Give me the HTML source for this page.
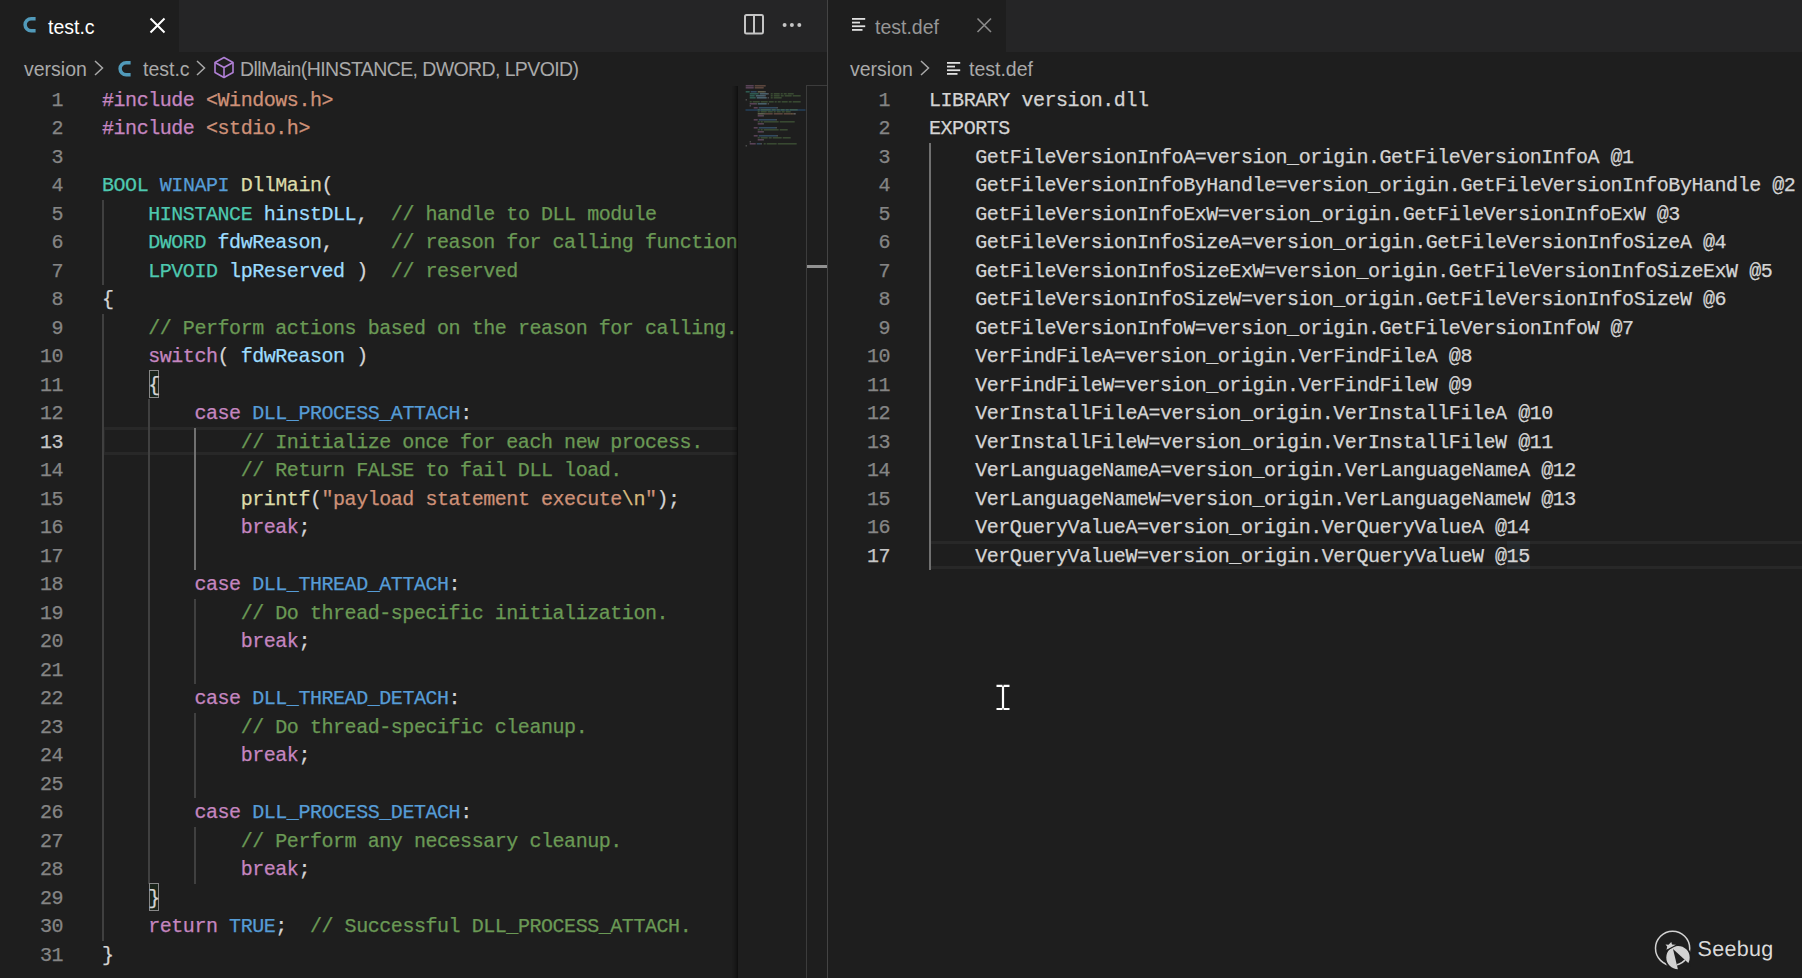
<!DOCTYPE html>
<html><head><meta charset="utf-8"><style>
*{margin:0;padding:0;box-sizing:border-box}
html,body{width:1802px;height:978px;overflow:hidden;background:#1e1e1e}
body{position:relative;font-family:"Liberation Sans",sans-serif}
.abs{position:absolute}
.code{position:absolute;white-space:pre;font-family:"Liberation Mono",monospace;font-size:20px;letter-spacing:-0.45px;line-height:28.5px;height:28.5px;color:#d4d4d4;-webkit-text-stroke:0.25px currentColor}
.ln{position:absolute;white-space:pre;font-family:"Liberation Mono",monospace;font-size:20px;letter-spacing:-0.45px;line-height:28.5px;height:28.5px;color:#858585;text-align:right;-webkit-text-stroke:0.25px currentColor}
.ui{position:absolute;white-space:pre;font-family:"Liberation Sans",sans-serif}
</style></head><body>

<div class="abs" style="left:0;top:0;width:827px;height:52px;background:#252526"></div>
<div class="abs" style="left:0;top:0;width:179px;height:52px;background:#1e1e1e"></div>
<div class="abs" style="left:828px;top:0;width:974px;height:52px;background:#252526"></div>
<div class="abs" style="left:828px;top:0;width:178px;height:52px;background:#1e1e1e"></div>
<div class="abs" style="left:827px;top:0;width:1px;height:978px;background:#444444"></div>
<svg class="abs" style="left:23px;top:16.7px" width="13" height="16" viewBox="0 0 13 16"><path d="M12.6 1.75H8.2A6.1 5.95 0 0 0 8.2 13.65H12.6" stroke="#519aba" stroke-width="3.5" fill="none"/></svg>
<div class="ui" style="left:48px;top:15.5px;font-size:19.5px;color:#ffffff;">test.c</div>
<svg class="abs" style="left:148px;top:16px" width="19" height="19" viewBox="0 0 19 19"><path d="M2.5 2.5L16.5 16.5M16.5 2.5L2.5 16.5" stroke="#ffffff" stroke-width="2" fill="none"/></svg>
<svg class="abs" style="left:742px;top:12px" width="24" height="24" viewBox="0 0 24 24"><rect x="3" y="3" width="18" height="18.5" rx="1.5" stroke="#c5c5c5" stroke-width="2" fill="none"/><line x1="12" y1="3" x2="12" y2="21.5" stroke="#c5c5c5" stroke-width="2"/></svg>
<svg class="abs" style="left:780px;top:20px" width="24" height="10" viewBox="0 0 24 10"><circle cx="4.6" cy="5" r="2" fill="#c5c5c5"/><circle cx="11.9" cy="5" r="2" fill="#c5c5c5"/><circle cx="19.3" cy="5" r="2" fill="#c5c5c5"/></svg>
<svg class="abs" style="left:852px;top:18.1px" width="14" height="14" viewBox="0 0 14 14"><g fill="#e0e0e0"><rect x="0" y="0" width="13.2" height="1.8"/><rect x="0" y="3.67" width="8" height="1.8"/><rect x="0" y="7.34" width="13.2" height="1.8"/><rect x="0" y="11" width="10.5" height="1.8"/></g></svg>
<div class="ui" style="left:875px;top:15.5px;font-size:19.5px;color:#969696;">test.def</div>
<svg class="abs" style="left:975px;top:16px" width="19" height="19" viewBox="0 0 19 19"><path d="M2.5 2.5L16 16M16 2.5L2.5 16" stroke="#8a8a8a" stroke-width="1.6" fill="none"/></svg>
<div class="ui" style="left:24px;top:58px;font-size:19.5px;color:#a9a9a9;">version</div>
<svg class="abs" style="left:93.5px;top:60px" width="10" height="16" viewBox="0 0 10 16"><path d="M1 1L8.5 8L1 15" stroke="#a9a9a9" stroke-width="1.5" fill="none"/></svg>
<svg class="abs" style="left:118px;top:60.8px" width="13" height="16" viewBox="0 0 13 16"><path d="M12.6 1.75H8.2A6.1 5.95 0 0 0 8.2 13.65H12.6" stroke="#519aba" stroke-width="3.5" fill="none"/></svg>
<div class="ui" style="left:143px;top:58px;font-size:19.5px;color:#a9a9a9;">test.c</div>
<svg class="abs" style="left:195.5px;top:60px" width="10" height="16" viewBox="0 0 10 16"><path d="M1 1L8.5 8L1 15" stroke="#a9a9a9" stroke-width="1.5" fill="none"/></svg>
<svg class="abs" style="left:213px;top:56px" width="22" height="23" viewBox="0 0 22 23"><g stroke="#b180d7" stroke-width="1.6" fill="none" stroke-linejoin="round"><path d="M11 1.5L20 6.5V16.5L11 21.5L2 16.5V6.5Z"/><path d="M2 6.5L11 11.5L20 6.5M11 11.5V21.5"/></g></svg>
<div class="ui" style="left:240px;top:58px;font-size:19.5px;color:#a9a9a9;letter-spacing:-0.6px">DllMain(HINSTANCE, DWORD, LPVOID)</div>
<div class="ui" style="left:850px;top:58px;font-size:19.5px;color:#a9a9a9;">version</div>
<svg class="abs" style="left:920px;top:60px" width="10" height="16" viewBox="0 0 10 16"><path d="M1 1L8.5 8L1 15" stroke="#a9a9a9" stroke-width="1.5" fill="none"/></svg>
<svg class="abs" style="left:947px;top:62.1px" width="14" height="14" viewBox="0 0 14 14"><g fill="#e0e0e0"><rect x="0" y="0" width="13.2" height="1.8"/><rect x="0" y="3.67" width="8" height="1.8"/><rect x="0" y="7.34" width="13.2" height="1.8"/><rect x="0" y="11" width="10.5" height="1.8"/></g></svg>
<div class="ui" style="left:969px;top:58px;font-size:19.5px;color:#a9a9a9;">test.def</div>
<div class="abs" style="left:0;top:85.5px;width:737px;height:892.5px;overflow:hidden">
<div class="abs" style="left:104px;top:341.50px;width:640px;height:28px;border:3px solid #282828;border-left-width:1px"></div>
<div class="abs" style="left:102.00px;top:114.00px;width:2px;height:85.50px;background:#404040"></div>
<div class="abs" style="left:102.00px;top:228.00px;width:2px;height:627.00px;background:#404040"></div>
<div class="abs" style="left:148.20px;top:313.50px;width:2px;height:484.50px;background:#404040"></div>
<div class="abs" style="left:194.40px;top:342.00px;width:2px;height:142.50px;background:#707070"></div>
<div class="abs" style="left:194.40px;top:513.00px;width:2px;height:85.50px;background:#404040"></div>
<div class="abs" style="left:194.40px;top:627.00px;width:2px;height:85.50px;background:#404040"></div>
<div class="abs" style="left:194.40px;top:741.00px;width:2px;height:57.00px;background:#404040"></div>
<div class="abs" style="left:149px;top:284.50px;width:10px;height:28px;border:1px solid #888888;background:rgba(0,100,0,0.1)"></div>
<div class="abs" style="left:149px;top:797.50px;width:10px;height:28px;border:1px solid #888888;background:rgba(0,100,0,0.1)"></div>
<div class="ln" style="left:0;top:1.00px;width:63px;color:#858585">1</div>
<div class="code" style="left:102px;top:1.00px"><span style="color:#c586c0">#include</span> <span style="color:#ce9178">&lt;Windows.h&gt;</span></div>
<div class="ln" style="left:0;top:29.50px;width:63px;color:#858585">2</div>
<div class="code" style="left:102px;top:29.50px"><span style="color:#c586c0">#include</span> <span style="color:#ce9178">&lt;stdio.h&gt;</span></div>
<div class="ln" style="left:0;top:58.00px;width:63px;color:#858585">3</div>
<div class="code" style="left:102px;top:58.00px"></div>
<div class="ln" style="left:0;top:86.50px;width:63px;color:#858585">4</div>
<div class="code" style="left:102px;top:86.50px"><span style="color:#4ec9b0">BOOL</span> <span style="color:#569cd6">WINAPI</span> <span style="color:#dcdcaa">DllMain</span>(</div>
<div class="ln" style="left:0;top:115.00px;width:63px;color:#858585">5</div>
<div class="code" style="left:102px;top:115.00px">    <span style="color:#4ec9b0">HINSTANCE</span> <span style="color:#9cdcfe">hinstDLL</span>,  <span style="color:#6a9955">// handle to DLL module</span></div>
<div class="ln" style="left:0;top:143.50px;width:63px;color:#858585">6</div>
<div class="code" style="left:102px;top:143.50px">    <span style="color:#4ec9b0">DWORD</span> <span style="color:#9cdcfe">fdwReason</span>,     <span style="color:#6a9955">// reason for calling function</span></div>
<div class="ln" style="left:0;top:172.00px;width:63px;color:#858585">7</div>
<div class="code" style="left:102px;top:172.00px">    <span style="color:#4ec9b0">LPVOID</span> <span style="color:#9cdcfe">lpReserved</span> )  <span style="color:#6a9955">// reserved</span></div>
<div class="ln" style="left:0;top:200.50px;width:63px;color:#858585">8</div>
<div class="code" style="left:102px;top:200.50px">{</div>
<div class="ln" style="left:0;top:229.00px;width:63px;color:#858585">9</div>
<div class="code" style="left:102px;top:229.00px">    <span style="color:#6a9955">// Perform actions based on the reason for calling.</span></div>
<div class="ln" style="left:0;top:257.50px;width:63px;color:#858585">10</div>
<div class="code" style="left:102px;top:257.50px">    <span style="color:#c586c0">switch</span>( <span style="color:#9cdcfe">fdwReason</span> )</div>
<div class="ln" style="left:0;top:286.00px;width:63px;color:#858585">11</div>
<div class="code" style="left:102px;top:286.00px">    {</div>
<div class="ln" style="left:0;top:314.50px;width:63px;color:#858585">12</div>
<div class="code" style="left:102px;top:314.50px">        <span style="color:#c586c0">case</span> <span style="color:#569cd6">DLL_PROCESS_ATTACH</span>:</div>
<div class="ln" style="left:0;top:343.00px;width:63px;color:#c6c6c6">13</div>
<div class="code" style="left:102px;top:343.00px">            <span style="color:#6a9955">// Initialize once for each new process.</span></div>
<div class="ln" style="left:0;top:371.50px;width:63px;color:#858585">14</div>
<div class="code" style="left:102px;top:371.50px">            <span style="color:#6a9955">// Return FALSE to fail DLL load.</span></div>
<div class="ln" style="left:0;top:400.00px;width:63px;color:#858585">15</div>
<div class="code" style="left:102px;top:400.00px">            <span style="color:#dcdcaa">printf</span>(<span style="color:#ce9178">&quot;payload statement execute</span><span style="color:#d7ba7d">\n</span><span style="color:#ce9178">&quot;</span>);</div>
<div class="ln" style="left:0;top:428.50px;width:63px;color:#858585">16</div>
<div class="code" style="left:102px;top:428.50px">            <span style="color:#c586c0">break</span>;</div>
<div class="ln" style="left:0;top:457.00px;width:63px;color:#858585">17</div>
<div class="code" style="left:102px;top:457.00px"></div>
<div class="ln" style="left:0;top:485.50px;width:63px;color:#858585">18</div>
<div class="code" style="left:102px;top:485.50px">        <span style="color:#c586c0">case</span> <span style="color:#569cd6">DLL_THREAD_ATTACH</span>:</div>
<div class="ln" style="left:0;top:514.00px;width:63px;color:#858585">19</div>
<div class="code" style="left:102px;top:514.00px">            <span style="color:#6a9955">// Do thread-specific initialization.</span></div>
<div class="ln" style="left:0;top:542.50px;width:63px;color:#858585">20</div>
<div class="code" style="left:102px;top:542.50px">            <span style="color:#c586c0">break</span>;</div>
<div class="ln" style="left:0;top:571.00px;width:63px;color:#858585">21</div>
<div class="code" style="left:102px;top:571.00px"></div>
<div class="ln" style="left:0;top:599.50px;width:63px;color:#858585">22</div>
<div class="code" style="left:102px;top:599.50px">        <span style="color:#c586c0">case</span> <span style="color:#569cd6">DLL_THREAD_DETACH</span>:</div>
<div class="ln" style="left:0;top:628.00px;width:63px;color:#858585">23</div>
<div class="code" style="left:102px;top:628.00px">            <span style="color:#6a9955">// Do thread-specific cleanup.</span></div>
<div class="ln" style="left:0;top:656.50px;width:63px;color:#858585">24</div>
<div class="code" style="left:102px;top:656.50px">            <span style="color:#c586c0">break</span>;</div>
<div class="ln" style="left:0;top:685.00px;width:63px;color:#858585">25</div>
<div class="code" style="left:102px;top:685.00px"></div>
<div class="ln" style="left:0;top:713.50px;width:63px;color:#858585">26</div>
<div class="code" style="left:102px;top:713.50px">        <span style="color:#c586c0">case</span> <span style="color:#569cd6">DLL_PROCESS_DETACH</span>:</div>
<div class="ln" style="left:0;top:742.00px;width:63px;color:#858585">27</div>
<div class="code" style="left:102px;top:742.00px">            <span style="color:#6a9955">// Perform any necessary cleanup.</span></div>
<div class="ln" style="left:0;top:770.50px;width:63px;color:#858585">28</div>
<div class="code" style="left:102px;top:770.50px">            <span style="color:#c586c0">break</span>;</div>
<div class="ln" style="left:0;top:799.00px;width:63px;color:#858585">29</div>
<div class="code" style="left:102px;top:799.00px">    }</div>
<div class="ln" style="left:0;top:827.50px;width:63px;color:#858585">30</div>
<div class="code" style="left:102px;top:827.50px">    <span style="color:#c586c0">return</span> <span style="color:#569cd6">TRUE</span>;  <span style="color:#6a9955">// Successful DLL_PROCESS_ATTACH.</span></div>
<div class="ln" style="left:0;top:856.00px;width:63px;color:#858585">31</div>
<div class="code" style="left:102px;top:856.00px">}</div>
</div>
<div class="abs" style="left:732px;top:85.5px;width:6px;height:892.5px;box-shadow:#000 -6px 0 6px -6px inset"></div>
<svg class="abs" style="left:738px;top:85px" width="68" height="892" viewBox="0 0 68 892"><rect x="7.5" y="24" width="60" height="2" fill="#264f78" opacity="0.5"/><rect x="7.7" y="0.3" width="8" height="1.1" fill="#c586c0" opacity="0.5"/><rect x="16.7" y="0.3" width="11" height="1.1" fill="#ce9178" opacity="0.5"/><rect x="7.7" y="2.3" width="8" height="1.1" fill="#c586c0" opacity="0.5"/><rect x="16.7" y="2.3" width="9" height="1.1" fill="#ce9178" opacity="0.5"/><rect x="7.7" y="6.3" width="4" height="1.1" fill="#4ec9b0" opacity="0.5"/><rect x="12.7" y="6.3" width="6" height="1.1" fill="#569cd6" opacity="0.5"/><rect x="19.7" y="6.3" width="7" height="1.1" fill="#dcdcaa" opacity="0.5"/><rect x="26.7" y="6.3" width="1" height="1.1" fill="#d4d4d4" opacity="0.5"/><rect x="11.7" y="8.3" width="9" height="1.1" fill="#4ec9b0" opacity="0.5"/><rect x="21.7" y="8.3" width="8" height="1.1" fill="#9cdcfe" opacity="0.5"/><rect x="29.7" y="8.3" width="1" height="1.1" fill="#d4d4d4" opacity="0.5"/><rect x="32.7" y="8.3" width="2" height="1.1" fill="#6a9955" opacity="0.5"/><rect x="35.7" y="8.3" width="6" height="1.1" fill="#6a9955" opacity="0.5"/><rect x="42.7" y="8.3" width="2" height="1.1" fill="#6a9955" opacity="0.5"/><rect x="45.7" y="8.3" width="3" height="1.1" fill="#6a9955" opacity="0.5"/><rect x="49.7" y="8.3" width="6" height="1.1" fill="#6a9955" opacity="0.5"/><rect x="11.7" y="10.3" width="5" height="1.1" fill="#4ec9b0" opacity="0.5"/><rect x="17.7" y="10.3" width="9" height="1.1" fill="#9cdcfe" opacity="0.5"/><rect x="26.7" y="10.3" width="1" height="1.1" fill="#d4d4d4" opacity="0.5"/><rect x="32.7" y="10.3" width="2" height="1.1" fill="#6a9955" opacity="0.5"/><rect x="35.7" y="10.3" width="6" height="1.1" fill="#6a9955" opacity="0.5"/><rect x="42.7" y="10.3" width="3" height="1.1" fill="#6a9955" opacity="0.5"/><rect x="46.7" y="10.3" width="7" height="1.1" fill="#6a9955" opacity="0.5"/><rect x="54.7" y="10.3" width="8" height="1.1" fill="#6a9955" opacity="0.5"/><rect x="11.7" y="12.3" width="6" height="1.1" fill="#4ec9b0" opacity="0.5"/><rect x="18.7" y="12.3" width="10" height="1.1" fill="#9cdcfe" opacity="0.5"/><rect x="29.7" y="12.3" width="1" height="1.1" fill="#d4d4d4" opacity="0.5"/><rect x="32.7" y="12.3" width="2" height="1.1" fill="#6a9955" opacity="0.5"/><rect x="35.7" y="12.3" width="8" height="1.1" fill="#6a9955" opacity="0.5"/><rect x="7.7" y="14.3" width="1" height="1.1" fill="#d4d4d4" opacity="0.5"/><rect x="11.7" y="16.3" width="2" height="1.1" fill="#6a9955" opacity="0.5"/><rect x="14.7" y="16.3" width="7" height="1.1" fill="#6a9955" opacity="0.5"/><rect x="22.7" y="16.3" width="7" height="1.1" fill="#6a9955" opacity="0.5"/><rect x="30.7" y="16.3" width="5" height="1.1" fill="#6a9955" opacity="0.5"/><rect x="36.7" y="16.3" width="2" height="1.1" fill="#6a9955" opacity="0.5"/><rect x="39.7" y="16.3" width="3" height="1.1" fill="#6a9955" opacity="0.5"/><rect x="43.7" y="16.3" width="6" height="1.1" fill="#6a9955" opacity="0.5"/><rect x="50.7" y="16.3" width="3" height="1.1" fill="#6a9955" opacity="0.5"/><rect x="54.7" y="16.3" width="8" height="1.1" fill="#6a9955" opacity="0.5"/><rect x="11.7" y="18.3" width="6" height="1.1" fill="#c586c0" opacity="0.5"/><rect x="17.7" y="18.3" width="1" height="1.1" fill="#d4d4d4" opacity="0.5"/><rect x="19.7" y="18.3" width="9" height="1.1" fill="#9cdcfe" opacity="0.5"/><rect x="29.7" y="18.3" width="1" height="1.1" fill="#d4d4d4" opacity="0.5"/><rect x="11.7" y="20.3" width="1" height="1.1" fill="#d4d4d4" opacity="0.5"/><rect x="15.7" y="22.3" width="4" height="1.1" fill="#c586c0" opacity="0.5"/><rect x="20.7" y="22.3" width="18" height="1.1" fill="#569cd6" opacity="0.5"/><rect x="38.7" y="22.3" width="1" height="1.1" fill="#d4d4d4" opacity="0.5"/><rect x="19.7" y="24.3" width="2" height="1.1" fill="#6a9955" opacity="0.5"/><rect x="22.7" y="24.3" width="10" height="1.1" fill="#6a9955" opacity="0.5"/><rect x="33.7" y="24.3" width="4" height="1.1" fill="#6a9955" opacity="0.5"/><rect x="38.7" y="24.3" width="3" height="1.1" fill="#6a9955" opacity="0.5"/><rect x="42.7" y="24.3" width="4" height="1.1" fill="#6a9955" opacity="0.5"/><rect x="47.7" y="24.3" width="3" height="1.1" fill="#6a9955" opacity="0.5"/><rect x="51.7" y="24.3" width="8" height="1.1" fill="#6a9955" opacity="0.5"/><rect x="19.7" y="26.3" width="2" height="1.1" fill="#6a9955" opacity="0.5"/><rect x="22.7" y="26.3" width="6" height="1.1" fill="#6a9955" opacity="0.5"/><rect x="29.7" y="26.3" width="5" height="1.1" fill="#6a9955" opacity="0.5"/><rect x="35.7" y="26.3" width="2" height="1.1" fill="#6a9955" opacity="0.5"/><rect x="38.7" y="26.3" width="4" height="1.1" fill="#6a9955" opacity="0.5"/><rect x="43.7" y="26.3" width="3" height="1.1" fill="#6a9955" opacity="0.5"/><rect x="47.7" y="26.3" width="5" height="1.1" fill="#6a9955" opacity="0.5"/><rect x="19.7" y="28.3" width="6" height="1.1" fill="#dcdcaa" opacity="0.5"/><rect x="25.7" y="28.3" width="1" height="1.1" fill="#d4d4d4" opacity="0.5"/><rect x="26.7" y="28.3" width="8" height="1.1" fill="#ce9178" opacity="0.5"/><rect x="35.7" y="28.3" width="9" height="1.1" fill="#ce9178" opacity="0.5"/><rect x="45.7" y="28.3" width="7" height="1.1" fill="#ce9178" opacity="0.5"/><rect x="52.7" y="28.3" width="2" height="1.1" fill="#d7ba7d" opacity="0.5"/><rect x="54.7" y="28.3" width="1" height="1.1" fill="#ce9178" opacity="0.5"/><rect x="55.7" y="28.3" width="2" height="1.1" fill="#d4d4d4" opacity="0.5"/><rect x="19.7" y="30.3" width="5" height="1.1" fill="#c586c0" opacity="0.5"/><rect x="24.7" y="30.3" width="1" height="1.1" fill="#d4d4d4" opacity="0.5"/><rect x="15.7" y="34.3" width="4" height="1.1" fill="#c586c0" opacity="0.5"/><rect x="20.7" y="34.3" width="17" height="1.1" fill="#569cd6" opacity="0.5"/><rect x="37.7" y="34.3" width="1" height="1.1" fill="#d4d4d4" opacity="0.5"/><rect x="19.7" y="36.3" width="2" height="1.1" fill="#6a9955" opacity="0.5"/><rect x="22.7" y="36.3" width="2" height="1.1" fill="#6a9955" opacity="0.5"/><rect x="25.7" y="36.3" width="15" height="1.1" fill="#6a9955" opacity="0.5"/><rect x="41.7" y="36.3" width="15" height="1.1" fill="#6a9955" opacity="0.5"/><rect x="19.7" y="38.3" width="5" height="1.1" fill="#c586c0" opacity="0.5"/><rect x="24.7" y="38.3" width="1" height="1.1" fill="#d4d4d4" opacity="0.5"/><rect x="15.7" y="42.3" width="4" height="1.1" fill="#c586c0" opacity="0.5"/><rect x="20.7" y="42.3" width="17" height="1.1" fill="#569cd6" opacity="0.5"/><rect x="37.7" y="42.3" width="1" height="1.1" fill="#d4d4d4" opacity="0.5"/><rect x="19.7" y="44.3" width="2" height="1.1" fill="#6a9955" opacity="0.5"/><rect x="22.7" y="44.3" width="2" height="1.1" fill="#6a9955" opacity="0.5"/><rect x="25.7" y="44.3" width="15" height="1.1" fill="#6a9955" opacity="0.5"/><rect x="41.7" y="44.3" width="8" height="1.1" fill="#6a9955" opacity="0.5"/><rect x="19.7" y="46.3" width="5" height="1.1" fill="#c586c0" opacity="0.5"/><rect x="24.7" y="46.3" width="1" height="1.1" fill="#d4d4d4" opacity="0.5"/><rect x="15.7" y="50.3" width="4" height="1.1" fill="#c586c0" opacity="0.5"/><rect x="20.7" y="50.3" width="18" height="1.1" fill="#569cd6" opacity="0.5"/><rect x="38.7" y="50.3" width="1" height="1.1" fill="#d4d4d4" opacity="0.5"/><rect x="19.7" y="52.3" width="2" height="1.1" fill="#6a9955" opacity="0.5"/><rect x="22.7" y="52.3" width="7" height="1.1" fill="#6a9955" opacity="0.5"/><rect x="30.7" y="52.3" width="3" height="1.1" fill="#6a9955" opacity="0.5"/><rect x="34.7" y="52.3" width="9" height="1.1" fill="#6a9955" opacity="0.5"/><rect x="44.7" y="52.3" width="8" height="1.1" fill="#6a9955" opacity="0.5"/><rect x="19.7" y="54.3" width="5" height="1.1" fill="#c586c0" opacity="0.5"/><rect x="24.7" y="54.3" width="1" height="1.1" fill="#d4d4d4" opacity="0.5"/><rect x="11.7" y="56.3" width="1" height="1.1" fill="#d4d4d4" opacity="0.5"/><rect x="11.7" y="58.3" width="6" height="1.1" fill="#c586c0" opacity="0.5"/><rect x="18.7" y="58.3" width="4" height="1.1" fill="#569cd6" opacity="0.5"/><rect x="22.7" y="58.3" width="1" height="1.1" fill="#d4d4d4" opacity="0.5"/><rect x="25.7" y="58.3" width="2" height="1.1" fill="#6a9955" opacity="0.5"/><rect x="28.7" y="58.3" width="10" height="1.1" fill="#6a9955" opacity="0.5"/><rect x="39.7" y="58.3" width="19" height="1.1" fill="#6a9955" opacity="0.5"/><rect x="7.7" y="60.3" width="1" height="1.1" fill="#d4d4d4" opacity="0.5"/></svg>
<div class="abs" style="left:806px;top:85px;width:21px;height:893px;border-left:1px solid #3c3c3c;border-top:1px solid #3c3c3c"></div>
<div class="abs" style="left:807px;top:265px;width:20px;height:3px;background:#919191"></div>
<div class="abs" style="left:828px;top:85.5px;width:974px;height:892.5px;overflow:hidden">
<div class="abs" style="left:102px;top:455.50px;width:900px;height:28px;border:3px solid #282828;border-left-width:1px"></div>
<div class="abs" style="left:101.00px;top:57.00px;width:2px;height:427.50px;background:#707070"></div>
<div class="abs" style="left:678.50px;top:455.50px;width:23.10px;height:27.5px;background:rgba(120,160,200,0.08)"></div>
<div class="ln" style="left:0;top:1.00px;width:62px;color:#858585">1</div>
<div class="code" style="left:101px;top:1.00px">LIBRARY version.dll</div>
<div class="ln" style="left:0;top:29.50px;width:62px;color:#858585">2</div>
<div class="code" style="left:101px;top:29.50px">EXPORTS</div>
<div class="ln" style="left:0;top:58.00px;width:62px;color:#858585">3</div>
<div class="code" style="left:101px;top:58.00px">    GetFileVersionInfoA=version_origin.GetFileVersionInfoA @1</div>
<div class="ln" style="left:0;top:86.50px;width:62px;color:#858585">4</div>
<div class="code" style="left:101px;top:86.50px">    GetFileVersionInfoByHandle=version_origin.GetFileVersionInfoByHandle @2</div>
<div class="ln" style="left:0;top:115.00px;width:62px;color:#858585">5</div>
<div class="code" style="left:101px;top:115.00px">    GetFileVersionInfoExW=version_origin.GetFileVersionInfoExW @3</div>
<div class="ln" style="left:0;top:143.50px;width:62px;color:#858585">6</div>
<div class="code" style="left:101px;top:143.50px">    GetFileVersionInfoSizeA=version_origin.GetFileVersionInfoSizeA @4</div>
<div class="ln" style="left:0;top:172.00px;width:62px;color:#858585">7</div>
<div class="code" style="left:101px;top:172.00px">    GetFileVersionInfoSizeExW=version_origin.GetFileVersionInfoSizeExW @5</div>
<div class="ln" style="left:0;top:200.50px;width:62px;color:#858585">8</div>
<div class="code" style="left:101px;top:200.50px">    GetFileVersionInfoSizeW=version_origin.GetFileVersionInfoSizeW @6</div>
<div class="ln" style="left:0;top:229.00px;width:62px;color:#858585">9</div>
<div class="code" style="left:101px;top:229.00px">    GetFileVersionInfoW=version_origin.GetFileVersionInfoW @7</div>
<div class="ln" style="left:0;top:257.50px;width:62px;color:#858585">10</div>
<div class="code" style="left:101px;top:257.50px">    VerFindFileA=version_origin.VerFindFileA @8</div>
<div class="ln" style="left:0;top:286.00px;width:62px;color:#858585">11</div>
<div class="code" style="left:101px;top:286.00px">    VerFindFileW=version_origin.VerFindFileW @9</div>
<div class="ln" style="left:0;top:314.50px;width:62px;color:#858585">12</div>
<div class="code" style="left:101px;top:314.50px">    VerInstallFileA=version_origin.VerInstallFileA @10</div>
<div class="ln" style="left:0;top:343.00px;width:62px;color:#858585">13</div>
<div class="code" style="left:101px;top:343.00px">    VerInstallFileW=version_origin.VerInstallFileW @11</div>
<div class="ln" style="left:0;top:371.50px;width:62px;color:#858585">14</div>
<div class="code" style="left:101px;top:371.50px">    VerLanguageNameA=version_origin.VerLanguageNameA @12</div>
<div class="ln" style="left:0;top:400.00px;width:62px;color:#858585">15</div>
<div class="code" style="left:101px;top:400.00px">    VerLanguageNameW=version_origin.VerLanguageNameW @13</div>
<div class="ln" style="left:0;top:428.50px;width:62px;color:#858585">16</div>
<div class="code" style="left:101px;top:428.50px">    VerQueryValueA=version_origin.VerQueryValueA @14</div>
<div class="ln" style="left:0;top:457.00px;width:62px;color:#c6c6c6">17</div>
<div class="code" style="left:101px;top:457.00px">    VerQueryValueW=version_origin.VerQueryValueW @15</div>
</div>
<svg class="abs" style="left:994px;top:682px" width="18" height="30" viewBox="0 0 18 30"><g stroke="#ffffff" stroke-width="2.2" fill="none"><path d="M2.5 3.8H8.5M9.5 3.8H15.5M9 4.3V26.5M2.5 27H8.5M9.5 27H15.5"/></g></svg>
<svg class="abs" style="left:1650px;top:925px" width="130" height="50" viewBox="0 0 130 50"><defs><clipPath id="wc"><polygon points="23,24 28.8,48 41,40.5"/></clipPath></defs><circle cx="22.6" cy="23.3" r="17.1" fill="none" stroke="#d2d2d2" stroke-width="1.5"/><circle cx="28" cy="32.6" r="12.6" fill="#d2d2d2" stroke="#1e1e1e" stroke-width="1.8"/><polygon points="23,24 28.8,48 41,40.5" fill="#1e1e1e"/><circle cx="22.6" cy="23.3" r="17.1" fill="none" stroke="#d2d2d2" stroke-width="1.5" clip-path="url(#wc)"/><path d="M16.5 25 L17.2 21.5 L15.5 19.5 L18.5 19.8 L21.3 17 L22 19.6 L25.8 19.8 L26.5 20.4 Z" fill="#d2d2d2"/><line x1="15.5" y1="26" x2="28" y2="19.3" stroke="#1e1e1e" stroke-width="1.2"/><text x="47.5" y="31" font-family="Liberation Sans" font-size="21.5" letter-spacing="0.3" fill="#dadada" stroke="#1e1e1e" stroke-width="1.1" paint-order="stroke" style="text-rendering:geometricPrecision">Seebug</text></svg>
</body></html>
